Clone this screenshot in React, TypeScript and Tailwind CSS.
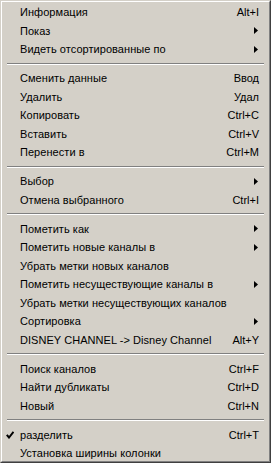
type Item = { label: string; shortcut?: string; sub?: boolean; checked?: boolean };
type Entry = Item | "sep";

const entries: Entry[] = [
  { label: "Информация", shortcut: "Alt+I" },
  { label: "Показ", sub: true },
  { label: "Видеть отсортированные по", sub: true },
  "sep",
  { label: "Сменить данные", shortcut: "Ввод" },
  { label: "Удалить", shortcut: "Удал" },
  { label: "Копировать", shortcut: "Ctrl+C" },
  { label: "Вставить", shortcut: "Ctrl+V" },
  { label: "Перенести в", shortcut: "Ctrl+M" },
  "sep",
  { label: "Выбор", sub: true },
  { label: "Отмена выбранного", shortcut: "Ctrl+I" },
  "sep",
  { label: "Пометить как", sub: true },
  { label: "Пометить новые каналы в", sub: true },
  { label: "Убрать метки новых каналов" },
  { label: "Пометить несуществующие каналы в", sub: true },
  { label: "Убрать метки несуществующих каналов" },
  { label: "Сортировка", sub: true },
  { label: "DISNEY CHANNEL -> Disney Channel", shortcut: "Alt+Y" },
  "sep",
  { label: "Поиск каналов", shortcut: "Ctrl+F" },
  { label: "Найти дубликаты", shortcut: "Ctrl+D" },
  { label: "Новый", shortcut: "Ctrl+N" },
  "sep",
  { label: "разделить", shortcut: "Ctrl+T", checked: true },
  { label: "Установка ширины колонки" },
];

function Arrow() {
  return (
    <svg width="4" height="7" viewBox="0 0 4 7" className="block">
      <path d="M0 0 L4 3.5 L0 7 Z" fill="#000" />
    </svg>
  );
}

function Check() {
  return (
    <svg width="8" height="8" viewBox="0 0 8 8" className="block">
      <path d="M0.8 3.8 L3 6.5 L7.5 0.8" stroke="#000" strokeWidth="2" fill="none" />
    </svg>
  );
}

export default function App() {
  return (
    <div
      className="w-[271px] h-[463px] bg-[#d4d0c8] border border-t-[#d4d0c8] border-l-[#d4d0c8] border-r-[#404040] border-b-[#404040] text-[11px] text-black"
      style={{ fontFamily: '"Liberation Sans", Arial, sans-serif' }}
    >
      <div className="h-full border border-t-white border-l-white border-r-[#808080] border-b-[#808080] pt-[1px] px-[1px]">
        {entries.map((e, i) =>
          e === "sep" ? (
            <div key={i} className="h-[10.5px] flex flex-col justify-center px-[4px]">
              <div className="h-px bg-[#808080]" />
              <div className="h-px bg-white" />
            </div>
          ) : (
            <div key={i} className="h-[18.5px] flex items-center">
              <div className="w-[17px] flex justify-start pl-[3px]">{e.checked && <Check />}</div>
              <span className="flex-1 whitespace-nowrap tracking-[0.05px]">{e.label}</span>
              {e.shortcut && <span className="pr-[9px] whitespace-nowrap">{e.shortcut}</span>}
              {e.sub && (
                <span className="pr-[10px]">
                  <Arrow />
                </span>
              )}
            </div>
          ),
        )}
      </div>
    </div>
  );
}
